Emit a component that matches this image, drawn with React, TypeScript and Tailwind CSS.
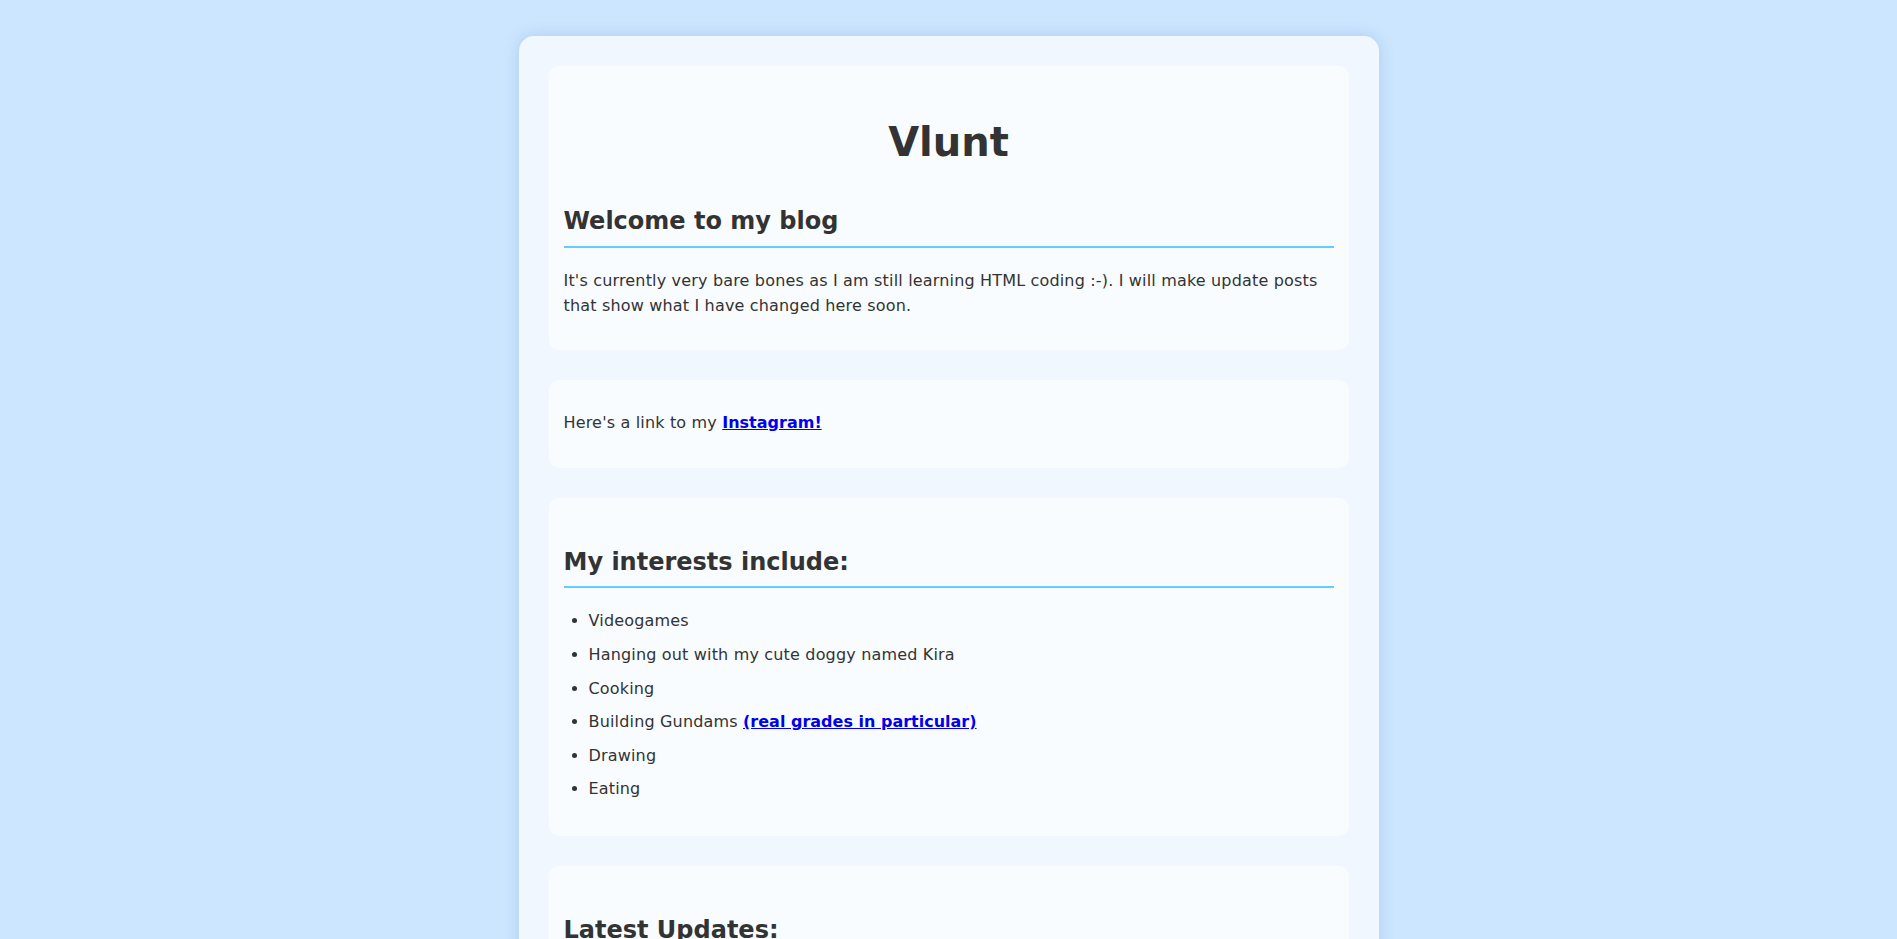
import type { ReactNode } from "react";

// Single-column personal blog: a pale container of stacked white-ish cards.

const LINK = "font-bold tracking-normal text-[#0000ee] underline";

const INTERESTS: ReactNode[] = [
  "Videogames",
  "Hanging out with my cute doggy named Kira",
  "Cooking",
  <>
    Building Gundams{" "}
    <a href="#" className={LINK}>
      (real grades in particular)
    </a>
  </>,
  "Drawing",
  "Eating",
];

function Card({ children }: { children: ReactNode }) {
  return <section className="rounded-[10px] bg-[#f8fcff] p-[15px]">{children}</section>;
}

function Heading({ children, className = "" }: { children: ReactNode; className?: string }) {
  return (
    <h2
      className={`border-b-2 border-[#66ccff] pb-[10px] text-[24px] leading-[28.8px] font-bold tracking-normal ${className}`}
    >
      {children}
    </h2>
  );
}

export default function App() {
  return (
    <div
      className="min-h-screen bg-[#cce6ff] pt-9 pb-9 text-[16px] leading-[1.6] tracking-[0.17px] text-[#333]"
      style={{ fontFamily: '"DejaVu Sans", Verdana, sans-serif' }}
    >
      <main className="mx-auto flex w-[860px] flex-col gap-[30px] rounded-[15px] bg-[#f0f7ff] p-[30px] shadow-[0_0_16px_rgba(40,90,150,0.18)]">
        <Card>
          <h1 className="mt-[37px] text-center text-[40px] leading-[48px] font-bold tracking-normal">
            Vlunt
          </h1>
          <Heading className="mt-[41px]">Welcome to my blog</Heading>
          <p className="mt-[20px] mb-[16px]">
            It's currently very bare bones as I am still learning HTML coding :-). I will make
            update posts that show what I have changed here soon.
          </p>
        </Card>

        <Card>
          <p className="mt-[15px] mb-[17px]">
            Here's a link to my{" "}
            <a href="#" className={LINK}>
              Instagram!
            </a>
          </p>
        </Card>

        <Card>
          <Heading className="mt-[35px]">My interests include:</Heading>
          <ul className="mt-5 mb-[19px] flex list-disc flex-col gap-2 pl-[25px]">
            {INTERESTS.map((item, i) => (
              <li key={i}>{item}</li>
            ))}
          </ul>
        </Card>

        <Card>
          <Heading className="mt-[35px]">Latest Updates:</Heading>
          <p className="mt-5 mb-[14px]">Nothing new yet, check back soon!</p>
        </Card>
      </main>
    </div>
  );
}
